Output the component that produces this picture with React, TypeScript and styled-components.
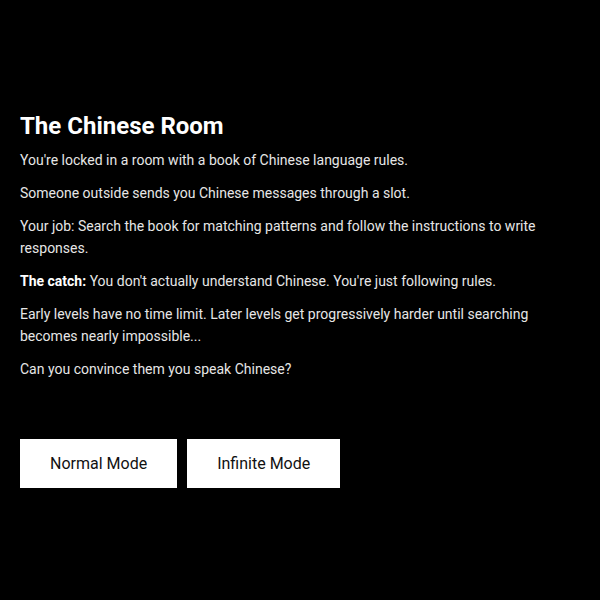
import * as React from 'react';
import styled, { createGlobalStyle } from 'styled-components';

const GlobalStyle = createGlobalStyle`
  html, body {
    margin: 0;
    padding: 0;
    background: #000;
  }
  body {
    font-family: Roboto, 'Liberation Sans', sans-serif;
  }
`;

const Screen = styled.div`
  min-height: 600px;
  box-sizing: border-box;
  background: #000;
  padding: 112px 20px 20px 20px;
  display: flex;
  flex-direction: column;
`;

const Title = styled.h1`
  margin: 0 0 9px 0;
  font-size: 24px;
  line-height: 28px;
  font-weight: 700;
  color: #fff;
`;

const Paragraph = styled.p`
  margin: 0 0 11px 0;
  font-size: 14px;
  line-height: 22px;
  color: #e6e6e6;
  max-width: 560px;

  strong {
    color: #fff;
    font-weight: 700;
  }
`;

const ButtonRow = styled.div`
  display: flex;
  gap: 10px;
  margin-top: 48px;
`;

const ModeButton = styled.button`
  background: #fff;
  color: #111;
  border: none;
  border-radius: 0;
  padding: 15px 30px;
  font-family: Roboto, 'Liberation Sans', sans-serif;
  font-size: 16px;
  line-height: 19px;
  cursor: pointer;
`;

export default function App() {
  return (
    <>
      <GlobalStyle />
      <Screen>
        <Title>The Chinese Room</Title>
        <Paragraph>You're locked in a room with a book of Chinese language rules.</Paragraph>
        <Paragraph>Someone outside sends you Chinese messages through a slot.</Paragraph>
        <Paragraph>
          Your job: Search the book for matching patterns and follow the instructions to write
          responses.
        </Paragraph>
        <Paragraph>
          <strong>The catch:</strong> You don't actually understand Chinese. You're just following
          rules.
        </Paragraph>
        <Paragraph>
          Early levels have no time limit. Later levels get progressively harder until searching
          becomes nearly impossible...
        </Paragraph>
        <Paragraph>Can you convince them you speak Chinese?</Paragraph>
        <ButtonRow>
          <ModeButton>Normal Mode</ModeButton>
          <ModeButton>Infinite Mode</ModeButton>
        </ButtonRow>
      </Screen>
    </>
  );
}
